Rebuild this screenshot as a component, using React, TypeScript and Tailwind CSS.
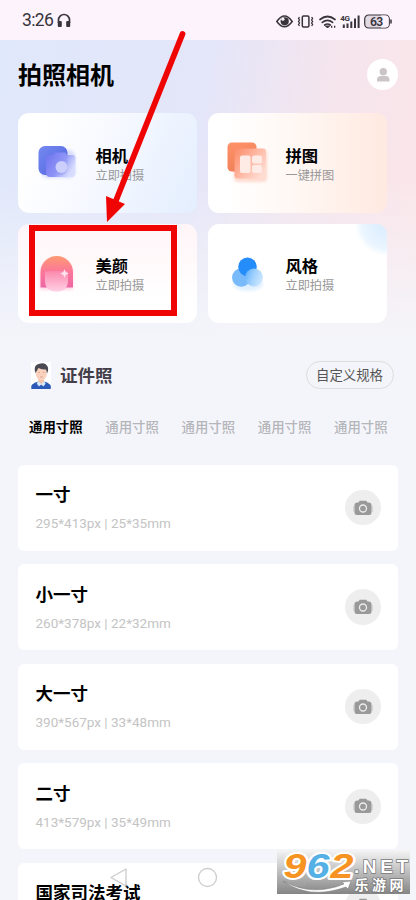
import React from "react";

const tools = [
  { title: "相机", sub: "立即拍摄", bg: "bg-[linear-gradient(115deg,#ffffff_15%,#f5f8ff_50%,#e3eefe_100%)]", icon: <CameraArt /> },
  { title: "拼图", sub: "一键拼图", bg: "bg-[linear-gradient(90deg,#ffffff_10%,#fff7f3_50%,#ffe9e0_100%)]", icon: <CollageArt /> },
  { title: "美颜", sub: "立即拍摄", bg: "bg-[linear-gradient(180deg,#fff5f8_0%,#fffafb_45%,#ffffff_75%)]", icon: <BeautyArt /> },
  { title: "风格", sub: "立即拍摄", bg: "bg-[radial-gradient(circle_at_100%_0%,#d9ecff_0px,#eaf5ff_25px,#ffffff_32px)]", icon: <StyleArt /> },
];

const sizes = [
  { name: "一寸", spec: "295*413px | 25*35mm" },
  { name: "小一寸", spec: "260*378px | 22*32mm" },
  { name: "大一寸", spec: "390*567px | 33*48mm" },
  { name: "二寸", spec: "413*579px | 35*49mm" },
  { name: "国家司法考试", spec: "" },
];

function CameraArt() {
  return (
    <svg viewBox="0 0 48 48" className="size-12">
      <defs>
        <linearGradient id="cam" x1="0" y1="0" x2="1" y2="1">
          <stop stopColor="#7489f1" /><stop offset="1" stopColor="#5264dd" />
        </linearGradient>
        <linearGradient id="camGlass" x1="0" y1="0" x2="1" y2=".5">
          <stop stopColor="#6d72ee" /><stop offset=".6" stopColor="#8f95f6" /><stop offset="1" stopColor="#d5d9fe" stopOpacity=".7" />
        </linearGradient>
        <filter id="soft" x="-30%" y="-30%" width="160%" height="160%"><feGaussianBlur stdDeviation="1.5" /></filter>
        <filter id="edge"><feGaussianBlur stdDeviation=".7" /></filter>
      </defs>
      <rect x="7" y="11" width="34" height="28" rx="6" fill="#9da7f6" opacity=".35" filter="url(#soft)" />
      <rect x="4.500" y="7" width="29" height="29" rx="6.500" fill="url(#cam)" />
      <path d="M15 16h4l2-2.500h10l2 2.500h5.500q3 0 3 3v15q0 4-4 4H16q-4 0-4-4V19q0-3 3-3Z" fill="url(#camGlass)" filter="url(#edge)" />
      <circle cx="27.500" cy="28" r="6" fill="#cccffc" />
    </svg>
  );
}

function CollageArt() {
  return (
    <svg viewBox="-2 0 48 48" className="size-12">
      <defs>
        <linearGradient id="col" x1="0" y1="0" x2=".4" y2="1">
          <stop stopColor="#ff9268" /><stop offset="1" stopColor="#ef8058" />
        </linearGradient>
        <linearGradient id="colGlass" x1="0" y1="0" x2="1" y2=".7">
          <stop stopColor="#fb8a67" /><stop offset=".55" stopColor="#ffb8a4" /><stop offset="1" stopColor="#ffdcd2" />
        </linearGradient>
      </defs>
      <rect x="8" y="11" width="33" height="32" rx="4" fill="#ffb09a" opacity=".45" filter="url(#soft)" />
      <rect x="1.500" y="3.500" width="29" height="29" rx="4.500" fill="url(#col)" />
      <rect x="8.500" y="9.500" width="31.500" height="30" rx="3" fill="url(#colGlass)" filter="url(#edge)" />
      <g fill="#ffebe5">
        <rect x="14" y="16.500" width="10.500" height="17.500" rx="2" />
        <rect x="26" y="16.500" width="10" height="8" rx="2" />
        <rect x="26" y="26" width="10" height="8" rx="2" />
      </g>
    </svg>
  );
}

function BeautyArt() {
  return (
    <svg viewBox="0 0 48 48" className="size-12">
      <defs>
        <linearGradient id="hair" x1="0" y1="0" x2="0" y2="1">
          <stop stopColor="#ff9a72" /><stop offset=".5" stopColor="#fb7799" /><stop offset="1" stopColor="#ee66a5" />
        </linearGradient>
        <linearGradient id="face" x1="0" y1="0" x2="0" y2="1">
          <stop stopColor="#fa8aae" /><stop offset="1" stopColor="#ffd0e4" />
        </linearGradient>
      </defs>
      <path d="M6 41V24.500a16.500 16.500 0 0 1 33 0V41Z" fill="#ffa7c5" opacity=".4" filter="url(#soft)" />
      <path d="M6.500 38.500V23.200a16.200 16.200 0 0 1 32.500 0v15.300Z" fill="url(#hair)" />
      <path d="M11 22.500q11-1 23 0v9q0 11-11.500 11T11 31.500Z" fill="url(#face)" filter="url(#edge)" />
      <path d="m30.500 22 .8 1.700 1.700.8-1.700.8-.8 1.700-.8-1.700-1.700-.8 1.700-.8Z" fill="#ffe2ed" stroke="#ffe2ed" strokeWidth="1.500" />
    </svg>
  );
}

function StyleArt() {
  return (
    <svg viewBox="-2 -3 48 48" className="size-12">
      <defs>
        <linearGradient id="bub" x1="0" y1=".2" x2="1" y2=".6">
          <stop stopColor="#62b0fb" /><stop offset=".5" stopColor="#a3d2fe" /><stop offset="1" stopColor="#cfe8ff" />
        </linearGradient>
      </defs>
      <ellipse cx="22" cy="32" rx="15" ry="7" fill="#acd7ff" opacity=".35" filter="url(#soft)" />
      <circle cx="15.300" cy="25.500" r="9.300" fill="#78bafa" />
      <circle cx="21.500" cy="14.800" r="9.300" fill="#258dfa" />
      <circle cx="28" cy="25.500" r="9" fill="url(#bub)" />
    </svg>
  );
}

function StatusIcons() {
  return (
    <svg viewBox="0 0 120 20" className="h-5 w-[120px]" fill="none" stroke="#39343b">
      <path d="M.8 10.500Q8.500-.5 16.200 10.500 8.500 21 .8 10.500Z" strokeWidth="1.500" />
      <circle cx="8.700" cy="10.300" r="4.100" fill="#39343b" stroke="none" />
      <circle cx="6.900" cy="8.200" r="1.600" fill="#fcf3fc" stroke="none" />
      <rect x="26.300" y="5" width="6.600" height="11" rx="1.200" strokeWidth="1.500" />
      <path d="m23.500 6-1 1.500 1 1.500-1 1.500 1 1.500-1 1.500 1 1.500M35.600 6l1 1.500-1 1.500 1 1.500-1 1.500 1 1.500-1 1.500" strokeWidth="1.300" />
      <path d="M44 8.500q7.500-6 15 0M46.300 11.400q5.200-4 10.300 0M48.700 14q2.800-2 5.500 0" strokeWidth="1.700" strokeLinecap="round" />
      <path d="m49.500 15 2 2 2-2Z" fill="#39343b" />
      <path d="M55 15.800h1.300M58 15.800h1.300" strokeWidth="2" />
      <text x="64.200" y="10" fontSize="8" fontWeight="700" fill="#39343b" stroke="none" textLength="9.800" className="font-['Roboto',sans-serif]">4G</text>
      <path d="M67.800 17v-3.500M71.500 17v-4.500M75.300 17v-6.500M79 17V7.500M82.600 17V4.500" strokeWidth="2" />
      <rect x="88.700" y="4" width="24.600" height="13" rx="4" fill="#e0d8e2" strokeWidth="1.200" />
      <path d="M105 4.600h4.500q3.200 0 3.200 3.200v5.400q0 3.200-3.200 3.200H105Z" fill="#fcf3fc" stroke="none" />
      <path d="M115 8.500v4" strokeWidth="1.500" />
      <text x="94" y="14.900" fontSize="12.200" fontWeight="600" fill="#39343b" stroke="none" textLength="13.200" className="font-['Roboto',sans-serif]">63</text>
    </svg>
  );
}

function Headphones() {
  return (
    <svg viewBox="0 0 14 15" className="h-[15px] w-3.5" fill="none">
      <path d="M1.500 10V7a5.500 5.500 0 0 1 11 0v3" stroke="#39343b" strokeWidth="1.700" />
      <rect x=".8" y="8" width="4" height="6" rx="1" fill="#39343b" />
      <rect x="9.200" y="8" width="4" height="6" rx="1" fill="#39343b" />
    </svg>
  );
}

function Portrait() {
  return (
    <svg viewBox="0 0 20 27" className="h-[27px] w-5 bg-white">
      <path d="M.3 27v-3q.5-2.500 7-4.500h6q6 2 6.500 4.500v3Z" fill="#2b5ab8" />
      <path d="M7.300 16h5.800v4.500L10 23.500l-2.700-3Z" fill="#f4c1a8" />
      <path d="m7 19-1.200 2.800L8 24.500l2.200-2.300 2.200 2.300 2.200-2.700-1.300-2.800-3.100 3Z" fill="#d3e9fb" />
      <ellipse cx="10.300" cy="11.500" rx="5.600" ry="6.700" fill="#fad2bd" />
      <path d="M4.500 11Q2 3.500 7.500 2q7-2.500 9.300 3 .9 3-.7 6.500L15 7.500q-4 .2-7.500-1.500Z" fill="#4b4a53" />
      <path d="M7.500 10.500h1.500M12 10.500h1.500M9.200 15h2.500" stroke="#c9937f" strokeWidth=".7" />
    </svg>
  );
}

function ShotIcon() {
  return (
    <span className="flex size-[35.5px] shrink-0 items-center justify-center rounded-full bg-[#eeeeee]">
      <svg viewBox="0 0 20 16" className="h-4 w-5">
        <path d="M4.500 2.500h1L6.700.8h6.600l1.200 1.700h1q3 0 3 2.500v7.500q0 2.500-2.500 2.500H4q-2.500 0-2.500-2.500V5q0-2.500 3-2.500Z" fill="#999999" />
        <path d="M1 6v6M19 6v6" stroke="#bcbcbc" />
        <circle cx="10" cy="8.500" r="3.500" fill="none" stroke="#eeeeee" strokeWidth="1.300" />
      </svg>
    </span>
  );
}

function Watermark() {
  return (
    <div className="absolute top-[850px] left-[277px] h-11 w-[133px] bg-[linear-gradient(180deg,#f5f5f6_0%,#c4c4c5_45%,#858585_100%)]">
      <svg viewBox="0 0 133 44" className="h-11 w-[133px]">
        <path d="M12 20h16v15H12Z" fill="none" stroke="#aaaaaa" opacity=".6" />
        <g fontSize="34.500" fontWeight="700" fontStyle="italic" stroke="#ffffff" strokeWidth="4" strokeLinejoin="round" paintOrder="stroke" className="font-['Liberation_Sans',sans-serif]">
          <text x="6.500" y="28" textLength="23" lengthAdjust="spacingAndGlyphs" fill="#f79323">9</text>
          <text x="29.500" y="28" textLength="23" lengthAdjust="spacingAndGlyphs" fill="#55b1e5">6</text>
          <text x="53.500" y="28" textLength="23" lengthAdjust="spacingAndGlyphs" fill="#f79323">2</text>
        </g>
        <path d="M6 31q29 16 61 3l-2-2 9-1-3 8-2-2Q32 50 6 31Z" fill="#ffffff" stroke="#777777" strokeWidth=".5" />
        <g fill="#ffffff" stroke="#777777" strokeWidth="1.500" paintOrder="stroke">
          <text x="77" y="22.500" fontSize="19" fontWeight="700" textLength="54" className="font-['Liberation_Sans',sans-serif]">.NET</text>
          <text x="77.500" y="39.500" fontSize="14" fontWeight="700" textLength="49" className="font-['Liberation_Sans','Noto_Sans_CJK_SC',sans-serif]">乐游网</text>
        </g>
      </svg>
    </div>
  );
}

export default function App() {
  return (
    <div className="relative flex h-[900px] w-[416px] flex-col overflow-hidden bg-[#f4f5fa] font-['Roboto','Noto_Sans_CJK_SC',sans-serif] text-black">
      <header className="flex h-10 shrink-0 items-center justify-between bg-[#fcf3fc] pt-px pr-[20px] pl-[22px]">
        <div className="flex items-center gap-[3px] text-[17.5px] text-[#39343b]">
          <span className="w-8 tracking-[-0.6px]">3:26</span>
          <Headphones />
        </div>
        <StatusIcons />
      </header>

      <main className="h-[860px] bg-[linear-gradient(180deg,transparent_0px,#f4f5fa00_140px,#f4f5fa_300px),linear-gradient(100deg,#e0e8fb_0%,#e4e6f9_38%,#f5e5ed_60%,#fde6e8_88%)] px-[18px]">
        <div className="flex h-[73px] items-center justify-between pb-1">
          <h1 className="pt-[3px] text-[24px] leading-none font-bold">拍照相机</h1>
          <span className="flex size-[31px] items-center justify-center rounded-full bg-white">
            <svg viewBox="0 0 14 16" className="h-4 w-3.5" fill="#cbc5c7">
              <circle cx="7.300" cy="4.700" r="3.700" />
              <path d="M1 13q0-4 4-4h4.500q4 0 4 4v1.500H1Z" />
            </svg>
          </span>
        </div>

        <section className="grid w-[370px] grid-cols-[179px_179px] gap-x-[11px] gap-y-[11px]">
          {tools.map((t) => (
            <div key={t.title} className={`flex h-[99.5px] items-center gap-[13.5px] rounded-[11px] pl-4 ${t.bg}`}>
              {t.icon}
              <div className="pt-[6px]">
                <div className="text-[16.300px] leading-[20px] font-bold">{t.title}</div>
                <div className="text-[12.200px] leading-[18px] text-[#999999]">{t.sub}</div>
              </div>
            </div>
          ))}
        </section>

        <section className="mt-[38px] flex h-7 items-center justify-between pr-[4.5px] pl-[13px]">
          <div className="flex items-center gap-[9px] text-[17.500px] font-bold text-[#433e49]">
            <Portrait />
            <span className="pt-0.5">证件照</span>
          </div>
          <button className="h-7 w-[88px] rounded-full border border-[#dddddd] pt-0.5 text-[13.400px] leading-none whitespace-nowrap text-[#555555]">自定义规格</button>
        </section>

        <nav className="mt-[29px] flex h-5 gap-[22.700px] pl-[11px] text-[13.400px] leading-5 font-medium whitespace-nowrap text-[#b5b6ba]">
          {[0, 1, 2, 3, 4].map((n) => (
            <span key={n} className={n === 0 ? "font-bold text-black" : ""}>通用寸照</span>
          ))}
        </nav>

        <section className="mt-[26.500px] flex flex-col gap-[13.600px]">
          {sizes.map((s) => (
            <article key={s.name} className="flex h-[86px] shrink-0 items-center justify-between rounded-[6px] bg-white pr-[17.500px] pl-[17.500px]">
              <div className="pt-0.5">
                <h2 className="pt-px text-[17.500px] leading-6 font-bold">{s.name}</h2>
                <p className="mt-1 h-6 text-[13.500px] leading-6 whitespace-nowrap text-[#c4c4c4]">{s.spec}</p>
              </div>
              <ShotIcon />
            </article>
          ))}
        </section>
      </main>

      <svg viewBox="0 0 416 900" className="pointer-events-none absolute inset-0 h-[900px] w-[416px]" fill="none">
        <rect x="32" y="228" width="142" height="85" stroke="#f00505" strokeWidth="6" />
        <path d="M182.500 34 115 203" stroke="#f00505" strokeWidth="5.800" strokeLinecap="round" />
        <path d="M106 196 125 204 107 222Z" fill="#f00505" />
        <path d="M126 869v17l-15-8.500Z" stroke="#cccccc" strokeWidth="1.300" strokeLinejoin="round" />
        <circle cx="207.500" cy="877.500" r="9" stroke="#cccccc" strokeWidth="1.300" />
      </svg>
      <Watermark />
    </div>
  );
}
